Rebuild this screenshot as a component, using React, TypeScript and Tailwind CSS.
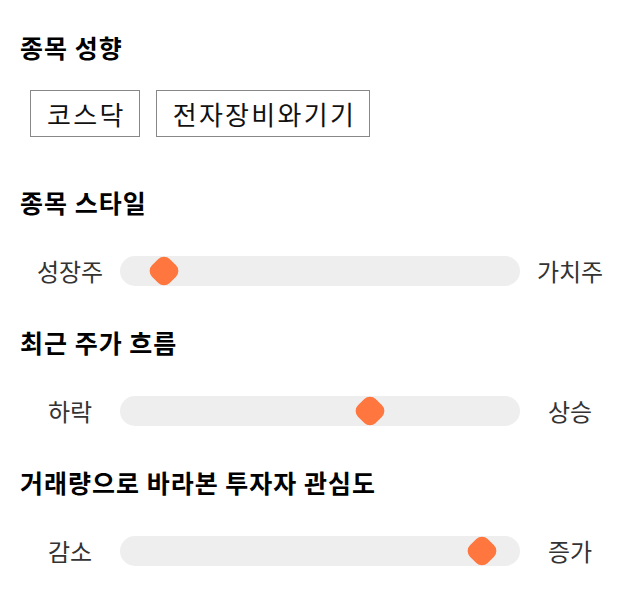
const sans = 'font-["Noto_Sans_CJK_KR","Noto_Sans",sans-serif]';

interface SliderRowProps {
  left: string;
  right: string;
  value: number;
}

function SliderRow({ left, right, value }: SliderRowProps) {
  return (
    <div className="flex h-[30px] items-center">
      <span className="w-[100px] text-center text-[24px] leading-[30px] text-[#333333]">{left}</span>
      <div className="relative h-[30px] flex-1 rounded-full bg-[#eeeeee]">
        <div
          className="absolute top-1/2 h-[25px] w-[25px] -translate-x-1/2 -translate-y-1/2 rotate-45 rounded-[8px] bg-[#ff763e]"
          style={{ left: `${value}%` }}
        />
      </div>
      <span className="w-[100px] text-center text-[24px] leading-[30px] text-[#333333]">{right}</span>
    </div>
  );
}

function Heading({ children }: { children: string }) {
  return (
    <h2 className="h-[32px] text-[25px] font-bold leading-[32px] tracking-[1px] text-black">{children}</h2>
  );
}

export default function App() {
  return (
    <div className={`${sans} min-h-[606px] w-[640px] bg-white px-5 pt-[31px]`}>
      <Heading>종목 성향</Heading>
      <div className="mt-[27px] flex gap-4 pl-[10px]">
        {['코스닥', '전자장비와기기'].map((tag) => (
          <button
            key={tag}
            type="button"
            className="h-[47px] border border-[#888888] bg-white pl-[16px] pr-[13px] text-[26px] tracking-[2.3px] text-[#111111]"
          >
            {tag}
          </button>
        ))}
      </div>

      <div className="mt-[49px]">
        <Heading>종목 스타일</Heading>
      </div>
      <div className="mt-[38px]">
        <SliderRow left="성장주" right="가치주" value={11} />
      </div>

      <div className="mt-[40px]">
        <Heading>최근 주가 흐름</Heading>
      </div>
      <div className="mt-[38px]">
        <SliderRow left="하락" right="상승" value={62.6} />
      </div>

      <div className="mt-[40px]">
        <Heading>거래량으로 바라본 투자자 관심도</Heading>
      </div>
      <div className="mt-[38px]">
        <SliderRow left="감소" right="증가" value={90.4} />
      </div>
    </div>
  );
}
